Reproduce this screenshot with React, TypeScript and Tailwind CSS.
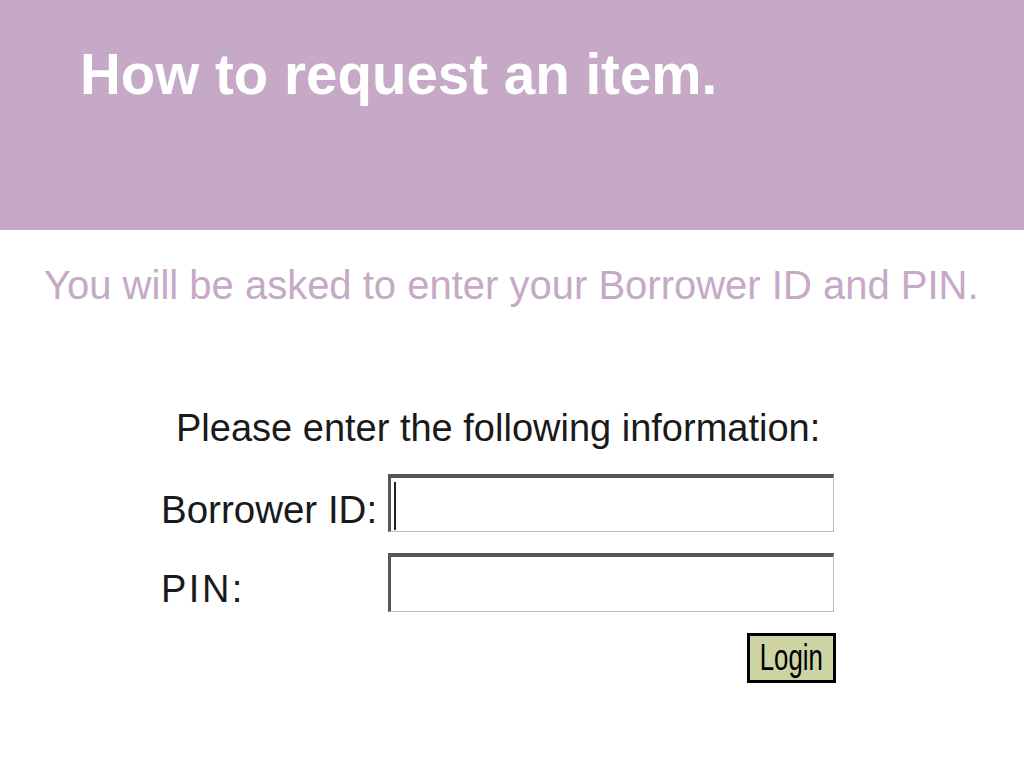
export default function App() {
    return (
        <main className="w-[1024px] h-[768px] bg-white overflow-hidden font-['Liberation_Sans',Arial,sans-serif]">
            <header className="h-[230px] bg-[#c5a9c7] pl-[80px] pt-[42px]">
                <h1 className="text-[56.5px] leading-[66px] font-bold text-white">How to request an item.</h1>
            </header>

            <p className="mt-[32px] pl-[44px] text-[40px] leading-[46px] text-[#c5a9c7]">
                You will be asked to enter your Borrower ID and PIN.
            </p>

            {/* login form screenshot */}
            <section className="ml-[158px] mt-[98px] w-[678px] text-[#1a1a1a]">
                <p className="pl-[18px] text-[38px] leading-[44px]">Please enter the following information:</p>

                <div className="mt-[24px] flex items-start">
                    <span className="w-[230px] pl-[3px] pt-[14px] text-[38.5px] leading-[44px]">Borrower ID:</span>
                    <div className="relative w-[446px] h-[58px] bg-white border-t-[4px] border-l-[3px] border-r border-b border-t-[#555] border-l-[#555] border-r-[#bbb] border-b-[#bbb]">
                        <span className="absolute left-[3px] top-[4px] w-[2px] h-[48px] bg-[#222]"></span>
                    </div>
                </div>

                <div className="mt-[21px] flex items-start">
                    <span className="w-[230px] pl-[3px] pt-[14px] text-[38px] leading-[44px] tracking-[2.5px]">PIN:</span>
                    <div className="w-[446px] h-[59px] bg-white border-t-[4px] border-l-[3px] border-r border-b border-t-[#555] border-l-[#555] border-r-[#bbb] border-b-[#bbb]"></div>
                </div>

                <div className="mt-[21px] flex justify-end">
                    <button className="w-[89px] h-[50px] flex items-center justify-center bg-[#cdd3a2] border-[3px] border-black text-black">
                        <span className="inline-block text-[28px] leading-none scale-x-[0.92] scale-y-[1.3]">Login</span>
                    </button>
                </div>
            </section>
        </main>
    );
}
